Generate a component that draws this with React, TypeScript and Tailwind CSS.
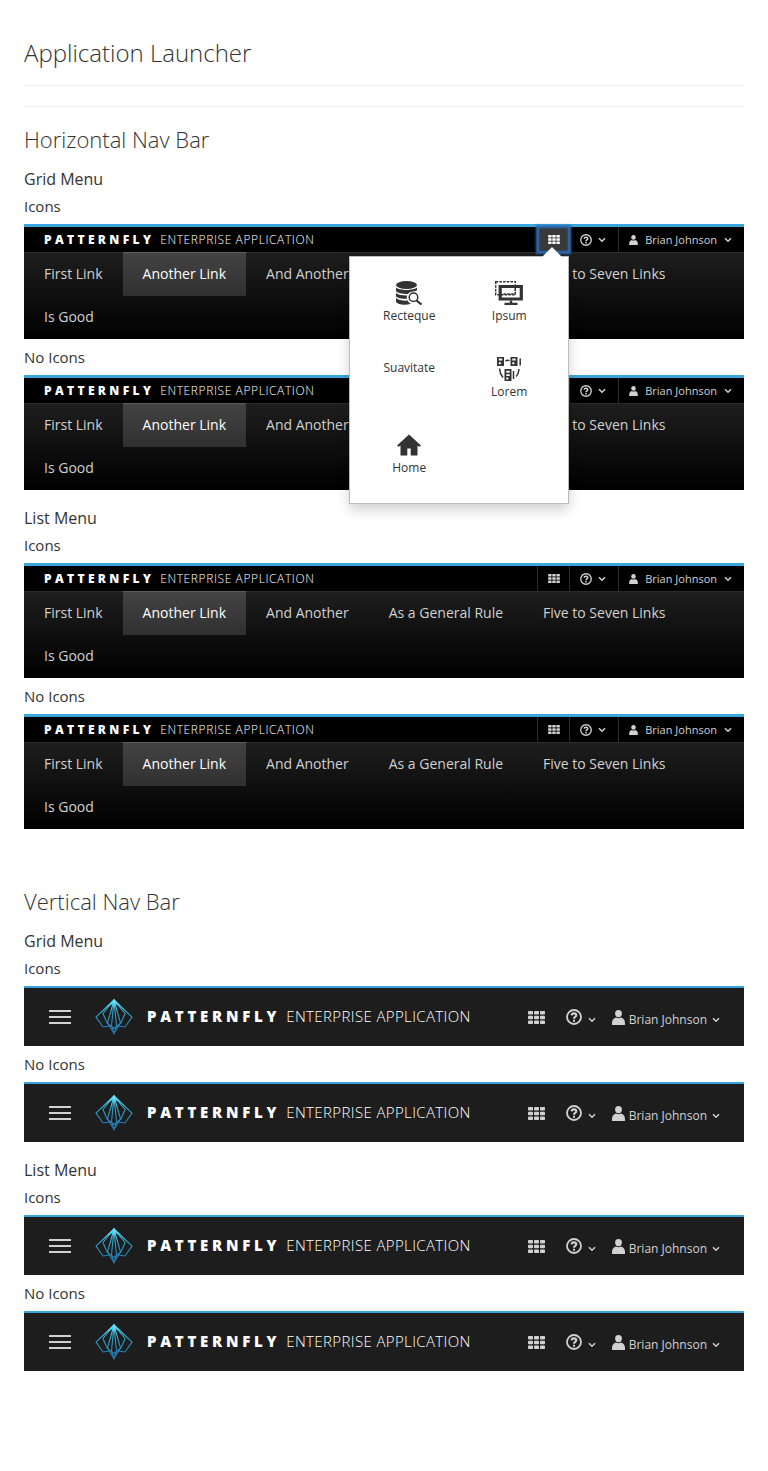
import React, { useState } from 'react';

type IconProps = { className?: string };

const GridIcon = ({ className }: IconProps) => (
  <svg viewBox="0 0 17 13" className={className} fill="currentColor" aria-hidden="true">
    {[0, 6, 12].map((x) =>
      [0, 4.7, 9.4].map((y) => <rect key={`${x}-${y}`} x={x} y={y} width="5" height="3.6" rx="0.8" />),
    )}
  </svg>
);

const HelpIcon = ({ className }: IconProps) => (
  <svg viewBox="0 0 16 16" className={className} fill="none" stroke="currentColor" aria-hidden="true">
    <circle cx="8" cy="8" r="7" strokeWidth="1.8" />
    <path d="M5.6 6.4C5.7 5 6.7 4.4 8 4.4S10.300 5.100 10.300 6.300C10.300 7.800 8 7.900 8 9.700" strokeWidth="2.100" />
    <path d="M7 10.700h2v2H7z" fill="currentColor" stroke="none" />
  </svg>
);

const UserIcon = ({ className }: IconProps) => (
  <svg viewBox="0 0 13 15" className={className} fill="currentColor" aria-hidden="true">
    <ellipse cx="6.500" cy="3.600" rx="3.400" ry="3.600" />
    <path d="M0 15v-2C0 9.800 1.500 8.200 4 7.400c1.500 1 3.500 1 5 0 2.500.8 4 2.400 4 5.600v2z" />
  </svg>
);

const ChevronIcon = ({ className }: IconProps) => (
  <svg viewBox="0 0 8 6" className={className} fill="none" stroke="currentColor" strokeWidth="1.500" aria-hidden="true">
    <path d="M1 1.200 4 4.200 7 1.200" />
  </svg>
);

const DatabaseSearchIcon = () => (
  <svg viewBox="0 0 28 24" className="h-6 w-7" fill="currentColor" aria-hidden="true">
    <ellipse cx="11.500" cy="4" rx="10.500" ry="4" />
    <path d="M1 6.500c3 3.300 18 3.300 21 0v2.800c-1.500 1-3 1.200-4.500 1.300-2 .1-3.500 1-4.500 2.300-5 .2-10-.6-12-2.600z" />
    <path d="M1 12c2.500 1.900 6.500 2.600 11.200 2.500-.4 1-.5 2.200-.3 3.300C7 17.900 2.600 17 1 15.500z" />
    <path d="M1 17.300c2.500 1.900 7 2.500 11.500 2.300.7 1.500 2 2.700 3.500 3.200C10 24.600 2.500 23.600 1 20.700z" />
    <circle cx="18.500" cy="16.300" r="4.300" fill="none" stroke="currentColor" strokeWidth="1.500" />
    <path d="m21.500 19.500 5 4" fill="none" stroke="currentColor" strokeWidth="2.200" />
  </svg>
);

const VirtualScreenIcon = () => (
  <svg viewBox="0 0 28 24" className="h-6 w-7" fill="none" stroke="currentColor" aria-hidden="true">
    <path d="M.7.700h19.600v13H.7z" strokeWidth="1.400" strokeDasharray="2.500 1.200" />
    <path d="M5.200 5.500h21.100v12.500H5.200z" strokeWidth="3.200" />
    <path d="M16 19.500v3M9.500 23h13" strokeWidth="2.400" />
    <path d="M8.500 13h11.800V7.500" strokeWidth="1.400" strokeDasharray="2.500 1.200" />
  </svg>
);

const ServerGroupIcon = () => (
  <svg viewBox="0 0 24 24" className="size-6" fill="none" stroke="currentColor" aria-hidden="true">
    <path
      fill="currentColor"
      fillRule="evenodd"
      stroke="none"
      d="M0 0h7v9H0zM1.800 1.600v2h3.400v-2zM1.800 5.200v2h2v-2zM13.500 0h7v9h-7zM15.300 1.600v2h3.400v-2zM15.300 5.200v2h2v-2zM7.500 12h7v12h-7zM9.300 13.800v2h3.400v-2zM9.300 17.300v1.600h3.400v-1.600zM9.300 20.500v2h2v-2z"
    />
    <path d="M23.200 1.500v7M16.500 14v8M8.500 4.200c1-1 2.500-1.300 4-.6M2.500 11.500c.2 3.500 1 6 3.500 9M22 12c-.2 3-1 5.500-2.700 7.500" strokeWidth="1.500" />
  </svg>
);

const HomeIcon = () => (
  <svg viewBox="0 0 24 24" className="size-6" fill="currentColor" aria-hidden="true">
    <path d="M12 1.500 0 12.500l1.500 1.200 2-1V22.500h6.800v-7h3.400v7h6.800v-9.800l2 1 1.500-1.200z" />
  </svg>
);

const LogoIcon = () => (
  <svg viewBox="0 0 38 36" className="h-9 w-[38px]" fill="none" aria-hidden="true">
    <defs>
      <linearGradient id="fan" x1="0" y1="0" x2="0" y2="36" gradientUnits="userSpaceOnUse">
        <stop offset="0" stopColor="#5fe6ff" />
        <stop offset="0.400" stopColor="#2f9fc8" />
        <stop offset="1" stopColor="#2273b4" />
      </linearGradient>
    </defs>
    <g stroke="url(#fan)" strokeWidth="1.100">
      <path d="M19 1 1 18l7 10 7-1M19 1l18 17-7 10-7-1" />
      <path d="M19 1 8 14.500 12 24l7 5.500L26 24l4-9.500z" />
      <path d="M19 1 12.500 24 19 34.500 25.500 24z" />
      <path d="M19 1l-2.500 26 2.500 7.500L21.500 27z" />
    </g>
    <path d="M19 0 13 7l6-2 6 2z" fill="#5fe6ff" fillOpacity="0.600" />
  </svg>
);

const Brand = ({ large = false }: { large?: boolean }) => (
  <span className={large ? 'flex items-baseline pb-[2px] text-[15px] whitespace-nowrap text-white' : 'flex items-baseline text-xs whitespace-nowrap text-white'}>
    <span className={large ? 'font-extrabold tracking-[0.250em]' : 'font-extrabold tracking-[0.280em]'}>PATTERNFLY</span>
    <span className={large ? 'ml-[6px] font-light tracking-wide' : 'ml-[6px] font-light tracking-wider'}>ENTERPRISE APPLICATION</span>
  </span>
);

const launcherItems = [
  { name: 'Recteque', icon: <DatabaseSearchIcon /> },
  { name: 'Ipsum', icon: <VirtualScreenIcon /> },
  { name: 'Suavitate', icon: null },
  { name: 'Lorem', icon: <ServerGroupIcon /> },
  { name: 'Home', icon: <HomeIcon /> },
];

const LauncherMenu = () => (
  <div className="absolute top-[29px] right-0 z-10 w-[220px] border border-[#bbb] bg-white px-[9px] pt-[10px] pb-2 shadow-[0_6px_12px_rgba(3,3,3,0.18)]">
    <svg viewBox="0 0 20 10" className="absolute -top-[10px] right-[6px] h-[10px] w-5" aria-hidden="true">
      <path d="M0 10 10 0l10 10z" fill="#fff" />
    </svg>
    <ul className="grid grid-cols-2">
      {launcherItems.map((item) => (
        <li key={item.name}>
          <a href="#" className="flex h-[76px] flex-col items-center pt-[14px] text-xs leading-[22px] font-normal text-[#333]">
            {item.icon}
            {item.name}
          </a>
        </li>
      ))}
    </ul>
  </div>
);

const links = ['First Link', 'Another Link', 'And Another', 'As a General Rule', 'Five to Seven Links', 'Is Good'];

const HorizontalBar = ({ defaultOpen = false }: { defaultOpen?: boolean }) => {
  const [open, setOpen] = useState(defaultOpen);
  return (
    <nav className="border-t-[3px] border-[#39a5dc] bg-black text-[#d1d1d1]">
      <div className="flex h-[25px] items-stretch justify-between">
        <div className="flex items-center pl-5">
          <Brand />
        </div>
        <div className="flex text-[11px] font-medium">
          <div className="relative flex w-8 border-l border-[#2b2b2b]">
            <button
              type="button"
              aria-label="Application launcher"
              aria-expanded={open}
              onClick={() => setOpen(!open)}
              className={
                open
                  ? 'flex flex-1 items-center justify-center bg-[#393939] text-white shadow-[0_0_2px_2px_#2b6cb4,inset_0_0_2px_1px_#2b6cb4]'
                  : 'flex flex-1 items-center justify-center'
              }
            >
              <GridIcon className="h-[9px] w-3" />
            </button>
            {open && <LauncherMenu />}
          </div>
          <button type="button" aria-label="Help" className="flex w-[49px] items-center gap-[6px] border-l border-[#2b2b2b] pl-[10px]">
            <HelpIcon className="size-3" />
            <ChevronIcon className="h-[6px] w-2" />
          </button>
          <button type="button" className="flex items-center border-l border-[#2b2b2b] pr-3 pl-[10px]">
            <UserIcon className="mr-[7px] h-[10px] w-[9px]" />
            <span className="pt-[2px]">Brian Johnson</span>
            <ChevronIcon className="ml-[7px] h-[6px] w-2" />
          </button>
        </div>
      </div>
      <ul className="flex flex-wrap border-t border-[#2b2b2b] bg-[linear-gradient(#1e1e1e,#000)] text-sm font-medium">
        {links.map((link) => (
          <li key={link}>
            <a
              href="#"
              className={
                link === 'Another Link'
                  ? '-mt-px flex h-11 items-center border-t border-[#5c5c5c] bg-[linear-gradient(#434343,#303030)] px-5 pb-[2px] text-white'
                  : 'flex h-[43px] items-center px-5 pb-[2px]'
              }
            >
              {link}
            </a>
          </li>
        ))}
      </ul>
    </nav>
  );
};

const VerticalBar = () => (
  <nav className="flex h-[60px] items-center justify-between border-t-2 border-[#39a5dc] bg-[#1d1d1d] text-[#d1d1d1]">
    <div className="flex items-center">
      <button type="button" aria-label="Toggle navigation" className="ml-[25px] flex w-[22px] flex-col gap-[4px]">
        <span className="h-[2px] bg-current" />
        <span className="h-[2px] bg-current" />
        <span className="h-[2px] bg-current" />
      </button>
      <a href="#" className="ml-6 flex items-center gap-[14px]">
        <LogoIcon />
        <Brand large />
      </a>
    </div>
    <div className="flex items-center pr-6 text-xs font-medium">
      <button type="button" aria-label="Application launcher" className="mr-[21px]">
        <GridIcon className="h-[13px] w-[17px]" />
      </button>
      <button type="button" aria-label="Help" className="mr-4 flex items-center gap-[6px]">
        <HelpIcon className="size-4" />
        <ChevronIcon className="mt-1.5 h-[6px] w-2" />
      </button>
      <button type="button" className="flex items-center">
        <UserIcon className="mr-1 h-[15px] w-[13px]" />
        <span className="mt-1.5">Brian Johnson</span>
        <ChevronIcon className="mt-1.5 ml-[5px] h-[6px] w-2" />
      </button>
    </div>
  </nav>
);

const Label = ({ children }: { children: React.ReactNode }) => (
  <h4 className="flex h-9 items-center text-[15px]">{children}</h4>
);

const MenuTitle = ({ children }: { children: React.ReactNode }) => (
  <h3 className="text-base leading-[18px]">{children}</h3>
);

export default function App() {
  return (
    <main className="bg-white px-6 pt-[37px] pb-[100px] font-['Open_Sans',sans-serif] text-[#333]">
      <h1 className="text-2xl leading-8 font-light">Application Launcher</h1>
      <hr className="mt-4 border-[#eee]" />
      <hr className="mt-5 border-[#eee]" />

      <section className="mt-[21px]">
        <h2 className="mb-5 text-[22px] leading-[22px] font-light">Horizontal Nav Bar</h2>
        <MenuTitle>Grid Menu</MenuTitle>
        <Label>Icons</Label>
        <HorizontalBar defaultOpen />
        <Label>No Icons</Label>
        <HorizontalBar />
        <div className="mt-[19px]">
          <MenuTitle>List Menu</MenuTitle>
          <Label>Icons</Label>
          <HorizontalBar />
          <Label>No Icons</Label>
          <HorizontalBar />
        </div>
      </section>

      <section className="mt-[61px]">
        <h2 className="mb-5 text-[22px] leading-[22px] font-light">Vertical Nav Bar</h2>
        <MenuTitle>Grid Menu</MenuTitle>
        <Label>Icons</Label>
        <VerticalBar />
        <Label>No Icons</Label>
        <VerticalBar />
        <div className="mt-[19px]">
          <MenuTitle>List Menu</MenuTitle>
          <Label>Icons</Label>
          <VerticalBar />
          <Label>No Icons</Label>
          <VerticalBar />
        </div>
      </section>
    </main>
  );
}
